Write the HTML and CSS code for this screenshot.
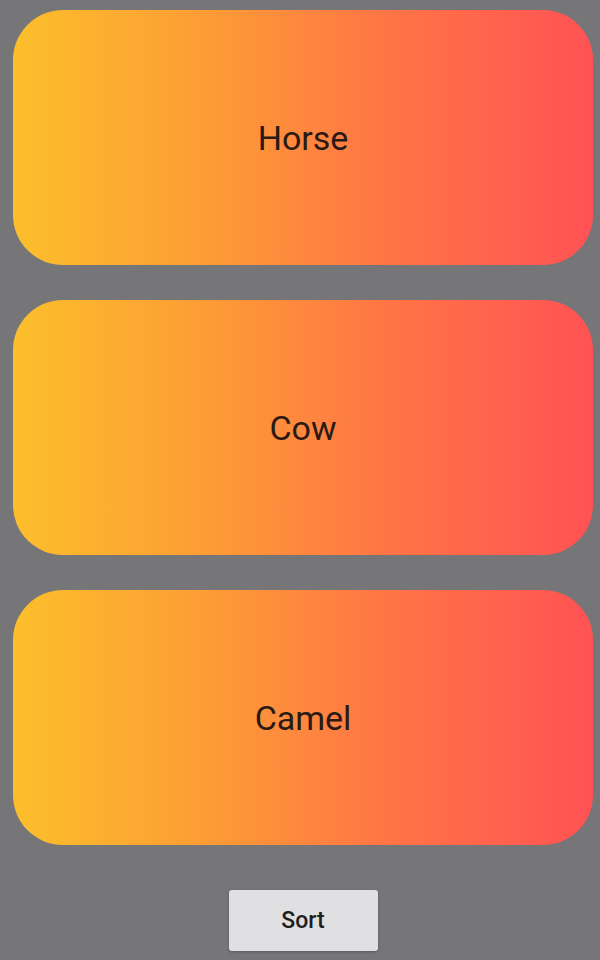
FILE: index.html
```html
<!DOCTYPE html>
<html>
<head>
<meta charset="utf-8">
<link rel="stylesheet" href="styles.css">
</head>
<body>
<div class="screen">
  <div class="list">
    <div class="card"><span class="label">Horse</span></div>
    <div class="card"><span class="label">Cow</span></div>
    <div class="card"><span class="label">Camel</span></div>
  </div>
  <div class="actions">
    <button class="sort-btn">Sort</button>
  </div>
</div>
</body>
</html>
```
FILE: styles.css
```css
html, body {
  margin: 0;
  padding: 0;
  background: #767577;
}
.screen {
  width: 600px;
  height: 960px;
  box-sizing: border-box;
  padding: 10px 7px 0 13px;
  display: flex;
  flex-direction: column;
  font-family: Roboto, "Liberation Sans", sans-serif;
}
.list {
  display: flex;
  flex-direction: column;
  gap: 35px;
}
.card {
  height: 255px;
  border-radius: 50px;
  background: linear-gradient(to right, #fcbf2b 0%, #fd9a36 35%, #ff7446 65%, #ff5254 100%);
  display: flex;
  align-items: center;
  justify-content: center;
}
.label {
  font-size: 34px;
  color: #2a1a14;
}
.actions {
  display: flex;
  justify-content: center;
  padding-top: 45px;
}
.sort-btn {
  width: 149px;
  height: 61px;
  border: none;
  border-radius: 3px;
  background: #e0dfe2;
  font-family: Roboto, "Liberation Sans", sans-serif;
  font-size: 23px;
  font-weight: 500;
  color: #1f1e20;
  box-shadow: 0 1px 3px rgba(0,0,0,0.25);
}
```
